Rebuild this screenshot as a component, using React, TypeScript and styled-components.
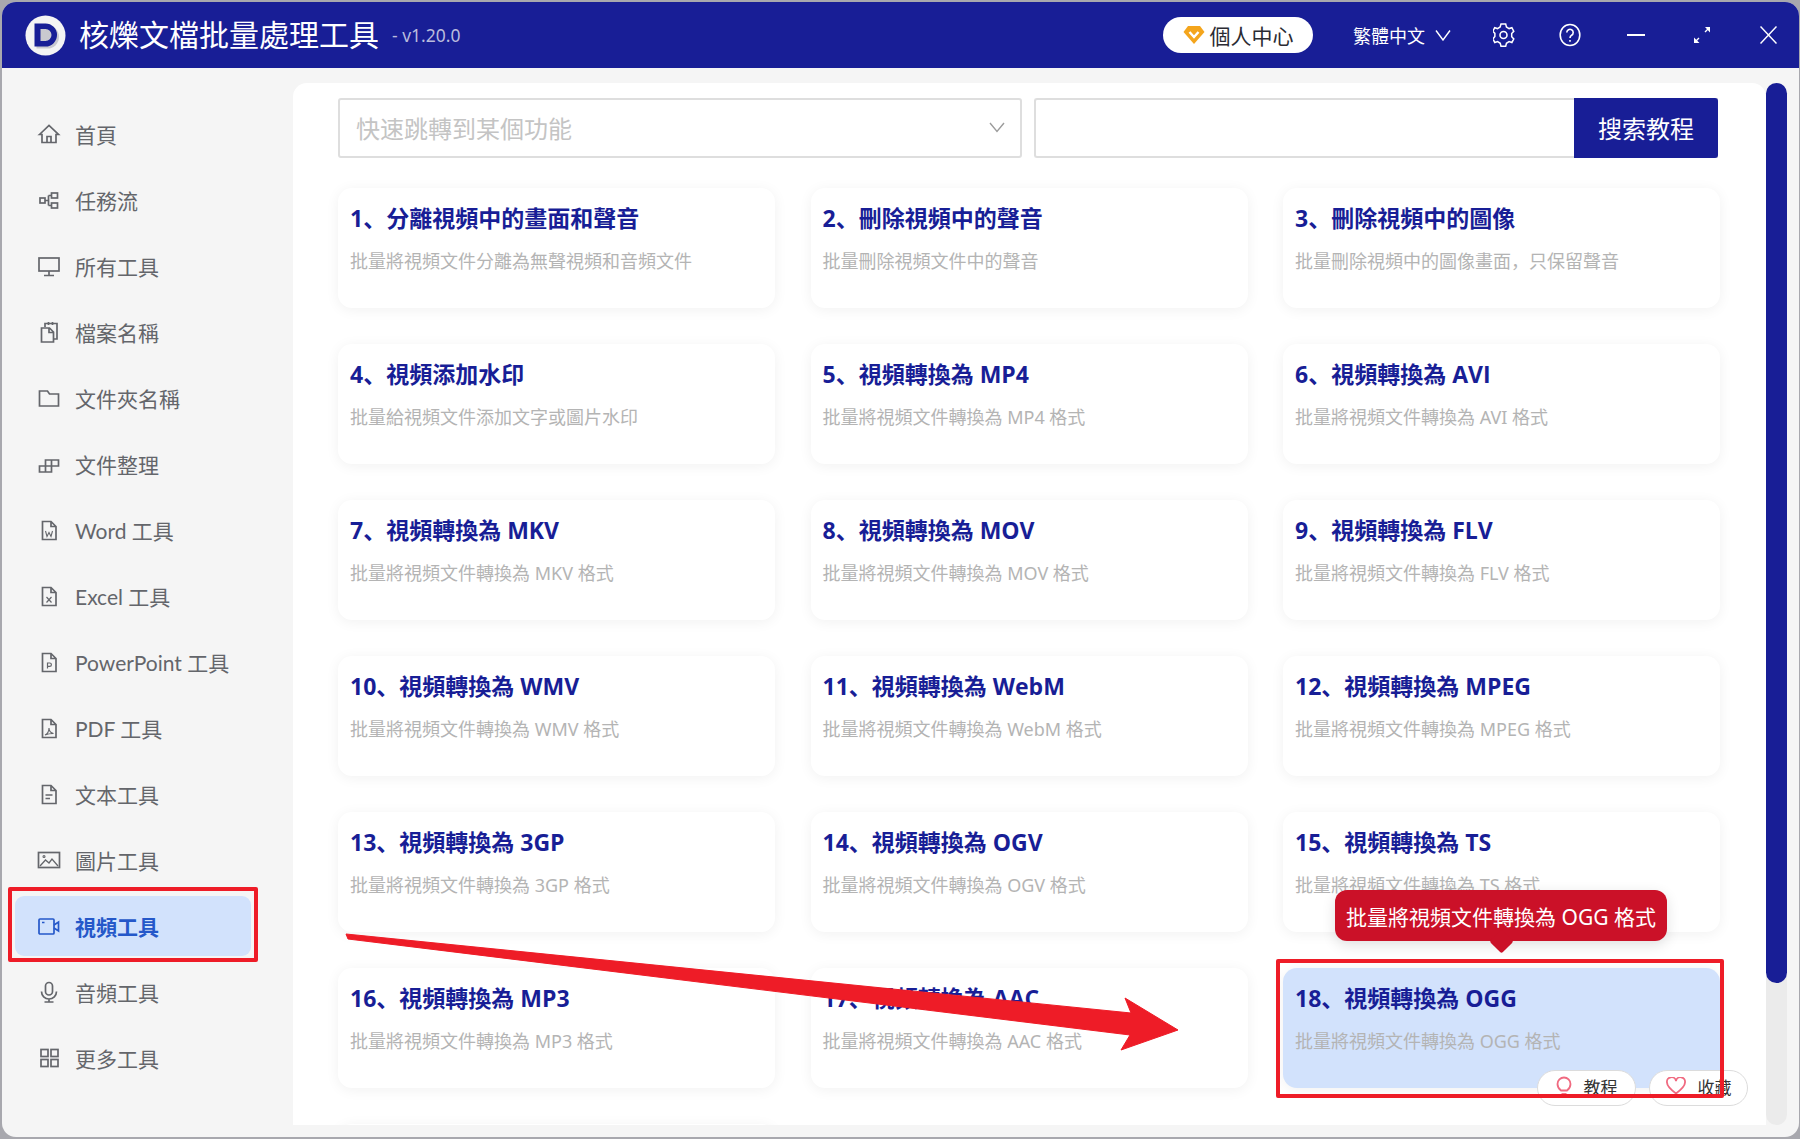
import React from 'react'
import styled, { createGlobalStyle } from 'styled-components'

const GlobalStyle = createGlobalStyle`
  html, body {
    margin: 0;
    padding: 0;
    width: 1800px;
    height: 1139px;
    overflow: hidden;
    background: #a8a8ae;
    font-family: "Noto Sans", "Noto Sans CJK SC", sans-serif;
  }
  * { box-sizing: border-box; }
`

const Stage = styled.div`
  position: relative;
  width: 1800px;
  height: 1139px;
  padding: 2px 1px 2px 2px;
`
const AppWindow = styled.div`
  width: 100%;
  height: 100%;
  display: flex;
  flex-direction: column;
  background: #f5f5f5;
  border-radius: 14px;
  overflow: hidden;
`
const TitleBar = styled.header`
  flex: 0 0 66px;
  display: flex;
  align-items: center;
  background: #181e96;
  color: #fff;
  padding-left: 23px;
`
const AppName = styled.h1`
  margin: 0 0 0 13px;
  font-size: 30px;
  font-weight: 400;
  line-height: 1;
  letter-spacing: 0;
`
const Version = styled.span`
  margin-left: 13px;
  font-size: 17.5px;
  color: #b9bbdd;
`
const TitleRight = styled.div`
  margin-left: auto;
  display: flex;
  align-items: center;
`
const ProfileButton = styled.button`
  width: 150px;
  height: 36px;
  border: 0;
  border-radius: 18px;
  background: #fff;
  display: flex;
  align-items: center;
  justify-content: center;
  gap: 5px;
  padding: 0;
  color: #2b2b33;
  font: 400 21px "Noto Sans CJK SC", sans-serif;
`
const LangSwitch = styled.div`
  margin-left: 40px;
  width: 104px;
  display: flex;
  align-items: center;
  gap: 10px;
  font: 400 18px "Noto Sans CJK SC", sans-serif;
`
const ControlIcon = styled.div`
  width: 66px;
  height: 30px;
  display: flex;
  align-items: center;
  justify-content: center;
`
const ControlGroup = styled.div`
  display: flex;
  margin-left: 14px;
  margin-right: -2px;
`
const Body = styled.div`
  flex: 1;
  min-height: 0;
  display: flex;
`
const Sidebar = styled.nav`
  flex: 0 0 291px;
  padding: 33px 0 0 13px;
  display: flex;
  flex-direction: column;
`
const NavItem = styled.div<{ $active?: boolean }>`
  width: 236px;
  height: 66px;
  flex: 0 0 66px;
  display: flex;
  align-items: center;
  padding-left: 22px;
  color: ${({ $active }) => ($active ? '#2558c9' : '#64666b')};
  font-family: Lato, "Noto Sans CJK SC", sans-serif;
  font-size: 21px;
  font-weight: ${({ $active }) => ($active ? 700 : 400)};
  position: relative;
  &::before {
    content: '';
    display: ${({ $active }) => ($active ? 'block' : 'none')};
    position: absolute;
    inset: 3px 0;
    background: #d2e2fc;
    border-radius: 9px;
  }
`
const NavIcon = styled.span`
  position: relative;
  width: 24px;
  height: 24px;
  display: flex;
  color: inherit;
`
const NavLabel = styled.span`
  position: relative;
  margin: 1px 0 0 14px;
  line-height: 1;
  white-space: nowrap;
`
const Main = styled.main`
  flex: 1;
  min-width: 0;
  display: flex;
  height: 1042px;
  margin-top: 15px;
  padding-right: 12px;
`
const Panel = styled.div`
  flex: 1;
  min-width: 0;
  background: #fff;
  border-radius: 14px 14px 0 0;
  padding: 15px 0 0 45px;
  overflow: hidden;
  margin-right: -1px;
`
const SearchRow = styled.div`
  display: flex;
  width: 1380px;
  height: 60px;
  gap: 12px;
`
const SelectBox = styled.div`
  flex: 0 0 684px;
  border: 2px solid #dedede;
  border-radius: 3px;
  display: flex;
  align-items: center;
  justify-content: space-between;
  padding: 0 15px 2px 16px;
  color: #c4c4c4;
  font: 400 24px "Noto Sans CJK SC", sans-serif;
`
const SearchBox = styled.div`
  flex: 1;
  display: flex;
  border: 2px solid #dedede;
  border-right: 0;
  border-radius: 3px 0 0 3px;
`
const SearchButton = styled.button`
  margin: -2px 0 -2px auto;
  width: 144px;
  border: 0;
  border-radius: 0 3px 3px 0;
  background: #181e96;
  color: #fff;
  font: 400 24px "Noto Sans CJK SC", sans-serif;
  padding: 0 0 2px;
`
const CardGrid = styled.div`
  margin-top: 30px;
  display: grid;
  grid-template-columns: repeat(3, 437px);
  grid-auto-rows: 120px;
  column-gap: 35.5px;
  row-gap: 36px;
`
const Card = styled.div<{ $active?: boolean }>`
  position: relative;
  border-radius: 14px;
  background: ${({ $active }) => ($active ? '#d2e2fc' : '#fff')};
  box-shadow: 0 2px 14px rgba(0, 0, 0, 0.06);
  padding: 12px 12px 0 12px;
`
const CardTitle = styled.div`
  color: #181e96;
  font-family: "Open Sans", "Noto Sans CJK SC", sans-serif;
  font-size: 23px;
  font-weight: 700;
  line-height: 36px;
  white-space: nowrap;
`
const CardDesc = styled.div`
  margin-top: 12px;
  color: #b4b4b4;
  font-size: 18px;
  line-height: 26px;
  white-space: nowrap;
`
const ScrollTrack = styled.div`
  flex: 0 0 21px;
  margin-left: 1px;
  background: #ebebeb;
  border-radius: 11px;
`
const ScrollThumb = styled.div`
  height: 900px;
  background: #181e96;
  border-radius: 11px;
`
const RedFrame = styled.div<{ $x: number; $y: number; $w: number; $h: number }>`
  position: absolute;
  left: ${({ $x }) => $x}px;
  top: ${({ $y }) => $y}px;
  width: ${({ $w }) => $w}px;
  height: ${({ $h }) => $h}px;
  border: 4px solid #ee1c27;
  border-radius: 2px;
  pointer-events: none;
`
const Tooltip = styled.div`
  position: absolute;
  left: 1335px;
  top: 890px;
  width: 332px;
  height: 51px;
  display: flex;
  align-items: center;
  justify-content: center;
  background: #cb1128;
  color: #fff;
  border-radius: 12px;
  font-size: 21px;
  white-space: nowrap;
  box-shadow: 0 4px 14px rgba(0, 0, 0, 0.12);
  &::after {
    content: '';
    position: absolute;
    left: 158px;
    bottom: -9px;
    width: 17px;
    height: 17px;
    background: #cb1128;
    transform: rotate(45deg);
    border-radius: 2px;
  }
`
const PillRow = styled.div`
  position: absolute;
  left: 1537px;
  top: 1070px;
  display: flex;
  gap: 13px;
`
const Pill = styled.div`
  width: 99px;
  height: 36px;
  border: 1px solid #dcdcdc;
  border-radius: 18px;
  background: #fff;
  display: flex;
  align-items: center;
  justify-content: center;
  gap: 12px;
  padding-bottom: 4px;
  color: #333;
  font: 400 17px "Noto Sans CJK SC", sans-serif;
`
const ArrowSvg = styled.svg`
  position: absolute;
  left: 0;
  top: 0;
  pointer-events: none;
`

const Icon = ({ children, size = 24, vb = 24 }: { children: React.ReactNode; size?: number; vb?: number }) => (
  <svg width={size} height={size} viewBox={`0 0 ${vb} ${vb}`} fill="none" stroke="currentColor" strokeWidth="1.7">
    {children}
  </svg>
)

const fileShape = 'M5.5 3.5h8.5l5 5v13h-13.5z M14 3.5v5h5'

const navItems: { label: string; icon: React.ReactNode; active?: boolean }[] = [
  { label: '首頁', icon: <><path d="M2.500 12.500 12 3.500l9.500 9h-2.500v8H5v-8z" /><path d="M10 20.500v-6h4v6" /></> },
  { label: '任務流', icon: <><rect x="3" y="10" width="5" height="5" /><rect x="14.500" y="5" width="6" height="5" /><rect x="14.500" y="15" width="6" height="5" /><path d="M8 12.500h3.500M11.500 7.500v10M11.500 7.500h3M11.500 17.500h3" /></> },
  { label: '所有工具', icon: <><rect x="2" y="4" width="20" height="13" /><path d="M12 17v4M7 21.500h10" /></> },
  { label: '檔案名稱', icon: <><path d="M4.500 8h8l4 4v10h-12z M12 8v4.500h4.500" /><path d="M8 7V3.500h12V19h-3.500M11.500 2v3M15.500 2v3" /></> },
  { label: '文件夾名稱', icon: <><path d="M2.500 5h8l2 3h9v12h-19z" /></> },
  { label: '文件整理', icon: <><path d="M2.500 14h6v6h-6zM8.500 14h6v6h-6zM8.500 8h6v6h-6zM14.500 8h7v6h-7z" /></> },
  { label: 'Word 工具', icon: <><path d={fileShape} /><path d="M8.500 13l1.500 5.500 2-4 2 4 1.500-5.500" strokeWidth="1.1" /></> },
  { label: 'Excel 工具', icon: <><path d={fileShape} /><path d="M9.500 13l5 5.500M14.500 13l-5 5.500" strokeWidth="1.2" /></> },
  { label: 'PowerPoint 工具', icon: <><path d={fileShape} /><path d="M10.500 18.500V13h2.200a1.700 1.700 0 0 1 0 3.400h-2.200" strokeWidth="1.2" /></> },
  { label: 'PDF 工具', icon: <><path d={fileShape} /><path d="M8 19c2-1 4-4 4-7 0 3 2 5 4.500 5.500-3 0-6 .5-8.500 1.500z" strokeWidth="1.1" /></> },
  { label: '文本工具', icon: <><path d={fileShape} /><path d="M8.500 13h7M8.500 16.500h4.500" /></> },
  { label: '圖片工具', icon: <><rect x="1.500" y="4.500" width="21" height="15" /><path d="M3 18l5.500-6 3.500 3 3-4 6 7" strokeWidth="1.3" /><circle cx="7" cy="8.500" r="1" strokeWidth="1.1" /></> },
  { label: '視頻工具', active: true, icon: <><rect x="2" y="5" width="15" height="15" rx="1" /><path d="M17 11l4.500-3v9L17 14M5 8.500h2.500" /></> },
  { label: '音頻工具', icon: <><rect x="8.500" y="2.500" width="7" height="12.500" rx="3.500" /><path d="M4.500 11.500a7.500 7.500 0 0 0 15 0M12 19v3M7.500 22h9" /></> },
  { label: '更多工具', icon: <><rect x="4" y="3.500" width="7" height="7" /><rect x="14" y="3.500" width="7" height="7" /><rect x="4" y="13.500" width="7" height="7" /><rect x="14" y="13.500" width="7" height="7" /></> },
]

const cards = [
  ['1、分離視頻中的畫面和聲音', '批量將視頻文件分離為無聲視頻和音頻文件'],
  ['2、刪除視頻中的聲音', '批量刪除視頻文件中的聲音'],
  ['3、刪除視頻中的圖像', '批量刪除視頻中的圖像畫面，只保留聲音'],
  ['4、視頻添加水印', '批量給視頻文件添加文字或圖片水印'],
  ['5、視頻轉換為 MP4', '批量將視頻文件轉換為 MP4 格式'],
  ['6、視頻轉換為 AVI', '批量將視頻文件轉換為 AVI 格式'],
  ['7、視頻轉換為 MKV', '批量將視頻文件轉換為 MKV 格式'],
  ['8、視頻轉換為 MOV', '批量將視頻文件轉換為 MOV 格式'],
  ['9、視頻轉換為 FLV', '批量將視頻文件轉換為 FLV 格式'],
  ['10、視頻轉換為 WMV', '批量將視頻文件轉換為 WMV 格式'],
  ['11、視頻轉換為 WebM', '批量將視頻文件轉換為 WebM 格式'],
  ['12、視頻轉換為 MPEG', '批量將視頻文件轉換為 MPEG 格式'],
  ['13、視頻轉換為 3GP', '批量將視頻文件轉換為 3GP 格式'],
  ['14、視頻轉換為 OGV', '批量將視頻文件轉換為 OGV 格式'],
  ['15、視頻轉換為 TS', '批量將視頻文件轉換為 TS 格式'],
  ['16、視頻轉換為 MP3', '批量將視頻文件轉換為 MP3 格式'],
  ['17、視頻轉換為 AAC', '批量將視頻文件轉換為 AAC 格式'],
  ['18、視頻轉換為 OGG', '批量將視頻文件轉換為 OGG 格式'],
  ['', ''],
]

const App: React.FC = () => {
  return (
    <Stage>
      <GlobalStyle />
      <AppWindow>
        <TitleBar>
          <svg width="41" height="41" viewBox="0 0 41 41">
            <circle cx="20.500" cy="20.500" r="20" fill="#f4f4f4" />
            <path d="M10 9h11a11.500 11.500 0 0 1 0 23H10z" fill="#c9c9cf" transform="translate(1.500 1.500)" />
            <path fillRule="evenodd" d="M9.500 8.500h11a11.500 11.500 0 0 1 0 23h-11z M15.500 14v12h5a6 6 0 0 0 0-12z" fill="#181e96" />
          </svg>
          <AppName>核爍文檔批量處理工具</AppName>
          <Version>- v1.20.0</Version>
          <TitleRight>
            <ProfileButton>
              <svg width="22" height="20" viewBox="0 0 22 20">
                <path d="M5 1h12l4.500 6L11 19 .5 7z" fill="#f4a51c" />
                <path d="M6.500 7l4.500 5 4.500-5" fill="none" stroke="#fff" strokeWidth="2.4" />
              </svg>
              個人中心
            </ProfileButton>
            <LangSwitch>
              繁體中文
              <svg width="16" height="12" viewBox="0 0 16 12" fill="none" stroke="#fff" strokeWidth="1.4">
                <path d="M1 1.500 8 11l7-9.500" />
              </svg>
            </LangSwitch>
            <ControlGroup>
              <ControlIcon>
                <svg width="22" height="24" viewBox="0 0 22 24" fill="none" stroke="#fff" strokeWidth="1.6">
                  <path d="M8.500 1.500h5l.8 3 2.800 1.600 3-.9 2 3.600-2.200 2.200v3.200l2.200 2.200-2 3.600-3-.9-2.800 1.600-.8 3h-5l-.8-3-2.800-1.600-3 .9-2-3.600L2 14v-3.200L-.2 8.800l2-3.600 3 .9 2.800-1.600z" transform="translate(0 -.5) scale(.94 1)" />
                  <circle cx="10.500" cy="12" r="3.500" />
                </svg>
              </ControlIcon>
              <ControlIcon>
                <svg width="22" height="24" viewBox="0 0 22 24" fill="none" stroke="#fff" strokeWidth="1.6">
                  <ellipse cx="11" cy="12" rx="9.800" ry="10.500" />
                  <path d="M7.800 9.500a3.200 3.200 0 1 1 4.800 2.800c-1 .6-1.600 1.200-1.600 2.700" />
                  <path d="M11 17v1.800" />
                </svg>
              </ControlIcon>
              <ControlIcon>
                <svg width="18" height="4" viewBox="0 0 18 4"><path d="M0 2h18" stroke="#fff" strokeWidth="2" /></svg>
              </ControlIcon>
              <ControlIcon>
                <svg width="18" height="20" viewBox="0 0 18 20" fill="#fff" stroke="#fff" strokeWidth="1.4">
                  <path d="M12 7 16.500 2.500M1.500 17.500 6 13" />
                  <path d="M12 2h5v5.500zM1 12.500 6.500 18H1z" stroke="none" />
                </svg>
              </ControlIcon>
              <ControlIcon>
                <svg width="17" height="18" viewBox="0 0 17 18" fill="none" stroke="#fff" strokeWidth="1.5">
                  <path d="M.5.500l16 17M16.500.500l-16 17" />
                </svg>
              </ControlIcon>
            </ControlGroup>
          </TitleRight>
        </TitleBar>
        <Body>
          <Sidebar>
            {navItems.map((item) => (
              <NavItem key={item.label} $active={item.active}>
                <NavIcon><Icon>{item.icon}</Icon></NavIcon>
                <NavLabel>{item.label}</NavLabel>
              </NavItem>
            ))}
          </Sidebar>
          <Main>
            <Panel>
              <SearchRow>
                <SelectBox>
                  快速跳轉到某個功能
                  <svg width="16" height="11" viewBox="0 0 16 11" fill="none" stroke="#9c9c9c" strokeWidth="1.4">
                    <path d="M1 1l7 8.500L15 1" />
                  </svg>
                </SelectBox>
                <SearchBox>
                  <SearchButton>搜索教程</SearchButton>
                </SearchBox>
              </SearchRow>
              <CardGrid>
                {cards.map(([title, desc], i) => (
                  <Card key={i} $active={i === 17}>
                    <CardTitle>{title}</CardTitle>
                    <CardDesc>{desc}</CardDesc>
                  </Card>
                ))}
              </CardGrid>
            </Panel>
            <ScrollTrack>
              <ScrollThumb />
            </ScrollTrack>
          </Main>
        </Body>
      </AppWindow>
      <ArrowSvg width="1800" height="1139" viewBox="0 0 1800 1139">
        <path d="M346 934 348 939 1130 1035 1121 1050 1178 1030 1125 998 1131 1013z" fill="#ee1c27" stroke="#ee1c27" strokeLinejoin="round" strokeWidth="1" />
      </ArrowSvg>
      <Tooltip>批量將視頻文件轉換為 OGG 格式</Tooltip>
      <PillRow>
        <Pill>
          <svg width="16" height="20" viewBox="0 0 16 20" fill="none" stroke="#f06a80" strokeWidth="1.8">
            <path d="M5 14.500C3 13 1.500 11 1.500 8a6.500 6.500 0 0 1 13 0c0 3-1.500 5-3.500 6.500z" />
            <path d="M5.500 18h5" />
          </svg>
          教程
        </Pill>
        <Pill>
          <svg width="20" height="18" viewBox="0 0 20 18" fill="none" stroke="#f06a80" strokeWidth="1.8">
            <path d="M10 16.500C4 12 1 9 1 5.500A4.500 4.500 0 0 1 10 4a4.500 4.500 0 0 1 9 1.500C19 9 16 12 10 16.500z" />
          </svg>
          收藏
        </Pill>
      </PillRow>
      <RedFrame $x={8} $y={887} $w={250} $h={75} />
      <RedFrame $x={1276} $y={959} $w={448} $h={139} />
    </Stage>
  )
}

export default App
